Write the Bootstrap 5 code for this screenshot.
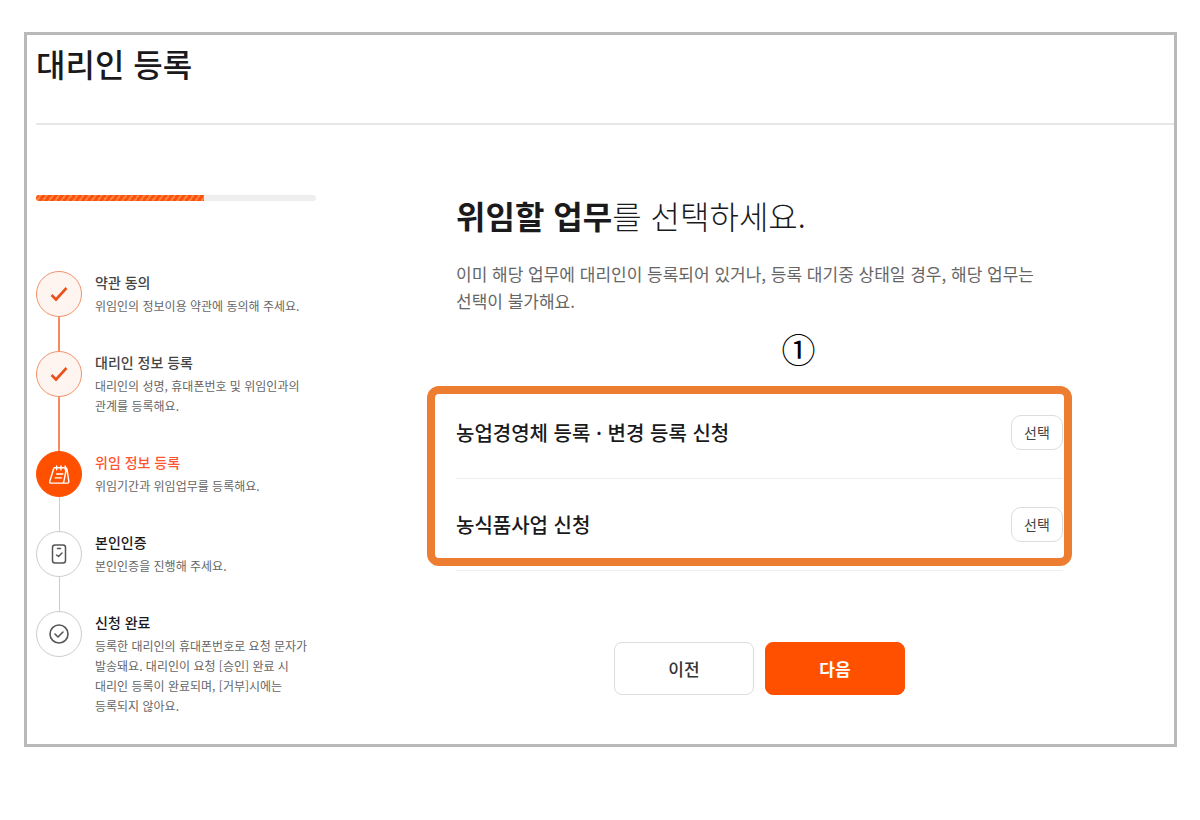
<!DOCTYPE html>
<html lang="ko">
<head>
<meta charset="utf-8">
<meta name="viewport" content="width=device-width, initial-scale=1">
<title>대리인 등록</title>
<link href="https://cdn.jsdelivr.net/npm/bootstrap@5.3.0/dist/css/bootstrap.min.css" rel="stylesheet">
<style>
  body { font-family: "Noto Sans CJK KR", "Noto Sans", sans-serif; color: #1a1a1c; background: #fff; word-break: keep-all; }
  .frame { margin: 32px 23px 32px 24px; border: 3px solid #b9b9b9; padding: 0 0 28px 9px; }
  .page-title { font-size: 32px; line-height: 40px; font-weight: 500; padding: 8px 0 40px; border-bottom: 2px solid #e6e6e6; }
  .layout { display: grid; grid-template-columns: 280px minmax(0, 1fr); column-gap: 140px; padding: 70px 111px 0 0; }
  .step-progress { height: 6px; border-radius: 3px; background: #eee; --bs-progress-bg: #eee; }
  .step-progress .progress-bar { background: repeating-linear-gradient(125deg, #f9530c 0 3px, #ff8040 3px 5px); }
  .steps { margin-top: 70px; }
  .step-mark { width: 46px; }
  .step-dot { width: 46px; height: 46px; border: 1px solid #ccc; border-radius: 50%; color: #555; }
  .step-line { width: 1px; background: #ccc; }
  .done .step-dot { border-color: #f39068; background: #fff5f0; color: #e8541c; }
  .done .step-line { width: 2px; background: #f58a5c; }
  .current .step-dot { border-color: #ff5000; background: #ff5000; color: #fff; }
  .step-text { margin-left: 13px; padding-bottom: 35px; }
  .step:last-child .step-text { padding-bottom: 0; }
  .step-name { font-size: 14px; line-height: 22px; font-weight: 500; margin: 0 0 3px; }
  .done .step-name { color: #444; }
  .current .step-name { color: #ff5630; }
  .step-desc { font-size: 12px; line-height: 20px; color: #666; margin: 0; }
  .question { font-size: 32px; line-height: 40px; font-weight: 300; margin: 0; }
  .guide { font-size: 17px; line-height: 27px; color: #666; margin: 25px 0 13px; }
  .callout { font-size: 34px; line-height: 44px; font-weight: 400; color: #000; padding-left: 78px; margin-bottom: 16px; }
  .tasks::after { content: ""; position: absolute; inset: -1px -9px 5px -29px; border: 8px solid #ed7d31; border-radius: 12px; pointer-events: none; }
  .task { height: 92px; border-bottom: 1px solid #eee; }
  .task-name { font-size: 20px; line-height: 30px; font-weight: 500; margin: 0; }
  .btn-pick { width: 52px; height: 35px; padding: 0; font-size: 14px; color: #444; border: 1px solid #ddd; border-radius: 10px; }
  .btn-move { width: 140px; height: 53px; font-size: 17px; font-weight: 500; border-radius: 8px; border: 1px solid #ddd; color: #333; }
  .btn-next, .btn-next:hover { background: #ff5000; border-color: #ff5000; color: #fff; font-weight: 700; }
  .moves { margin-top: 71px; gap: 11px; }
</style>
</head>
<body>
<main class="frame">
  <h1 class="page-title m-0">대리인 등록</h1>
  <div class="layout">
    <aside>
      <div class="progress step-progress" role="progressbar" aria-label="진행률" aria-valuenow="60" aria-valuemin="0" aria-valuemax="100">
        <div class="progress-bar" style="width:60%"></div>
      </div>
      <ol class="steps list-unstyled mb-0">
        <li class="step done d-flex">
          <div class="step-mark d-flex flex-column align-items-center flex-shrink-0">
            <span class="step-dot d-flex align-items-center justify-content-center flex-shrink-0">
              <svg width="20" height="20" viewBox="0 0 20 20" fill="none" stroke="currentColor" stroke-width="2.6"><path d="M2.5 11l4.500 4.500L17.500 4"/></svg>
            </span>
            <span class="step-line flex-grow-1"></span>
          </div>
          <div class="step-text">
            <h2 class="step-name">약관 동의</h2>
            <p class="step-desc">위임인의 정보이용 약관에 동의해 주세요.</p>
          </div>
        </li>
        <li class="step done d-flex">
          <div class="step-mark d-flex flex-column align-items-center flex-shrink-0">
            <span class="step-dot d-flex align-items-center justify-content-center flex-shrink-0">
              <svg width="20" height="20" viewBox="0 0 20 20" fill="none" stroke="currentColor" stroke-width="2.6"><path d="M2.5 11l4.500 4.500L17.500 4"/></svg>
            </span>
            <span class="step-line flex-grow-1"></span>
          </div>
          <div class="step-text">
            <h2 class="step-name">대리인 정보 등록</h2>
            <p class="step-desc">대리인의 성명, 휴대폰번호 및 위임인과의<br>관계를 등록해요.</p>
          </div>
        </li>
        <li class="step current d-flex" aria-current="step">
          <div class="step-mark d-flex flex-column align-items-center flex-shrink-0">
            <span class="step-dot d-flex align-items-center justify-content-center flex-shrink-0">
              <svg width="23" height="23" viewBox="0 0 24 24" fill="none" stroke="currentColor" stroke-width="1.5" stroke-linecap="round" stroke-linejoin="round"><path d="M7 5h11.500q1 0 1.200 1l2 13q.2 2-1.500 2H3.500q-2 0-1.700-1.800L5.800 6.200q.3-1.200 1.200-1.200zM19.200 6L16.500 19.500q-.3 1.500-1.700 1.500M9 3v4M13.500 3v4M18 3v4M9 11.500h6.500M7.500 15.500h6.500"/></svg>
            </span>
            <span class="step-line flex-grow-1"></span>
          </div>
          <div class="step-text">
            <h2 class="step-name">위임 정보 등록</h2>
            <p class="step-desc">위임기간과 위임업무를 등록해요.</p>
          </div>
        </li>
        <li class="step d-flex">
          <div class="step-mark d-flex flex-column align-items-center flex-shrink-0">
            <span class="step-dot d-flex align-items-center justify-content-center flex-shrink-0">
              <svg width="20" height="20" viewBox="0 0 20 20" fill="none" stroke="currentColor" stroke-width="1.500" stroke-linecap="round" stroke-linejoin="round"><rect x="3.500" y="1" width="13" height="18" rx="2.500"/><path d="M8.500 4.500h3M7.500 11l2 1.500 3.500-3.500"/></svg>
            </span>
            <span class="step-line flex-grow-1"></span>
          </div>
          <div class="step-text">
            <h2 class="step-name">본인인증</h2>
            <p class="step-desc">본인인증을 진행해 주세요.</p>
          </div>
        </li>
        <li class="step d-flex">
          <div class="step-mark d-flex flex-column align-items-center flex-shrink-0">
            <span class="step-dot d-flex align-items-center justify-content-center flex-shrink-0">
              <svg width="20" height="20" viewBox="0 0 20 20" fill="none" stroke="currentColor" stroke-width="1.600" stroke-linecap="round" stroke-linejoin="round"><circle cx="10" cy="10" r="9"/><path d="M6 10l3 3 5-5"/></svg>
            </span>
          </div>
          <div class="step-text">
            <h2 class="step-name">신청 완료</h2>
            <p class="step-desc">등록한 대리인의 휴대폰번호로 요청 문자가<br>발송돼요. 대리인이 요청 [승인] 완료 시<br>대리인 등록이 완료되며, [거부]시에는<br>등록되지 않아요.</p>
          </div>
        </li>
      </ol>
    </aside>
    <section>
      <h2 class="question"><strong class="fw-bold">위임할 업무</strong>를 선택하세요.</h2>
      <p class="guide">이미 해당 업무에 대리인이 등록되어 있거나, 등록 대기중 상태일 경우, 해당 업무는 <br>선택이 불가해요.</p>
      <div class="callout text-center">①</div>
      <ul class="tasks list-unstyled position-relative mb-0">
        <li class="task d-flex align-items-center justify-content-between">
          <h3 class="task-name">농업경영체 등록 · 변경 등록 신청</h3>
          <button type="button" class="btn btn-pick">선택</button>
        </li>
        <li class="task d-flex align-items-center justify-content-between">
          <h3 class="task-name">농식품사업 신청</h3>
          <button type="button" class="btn btn-pick">선택</button>
        </li>
      </ul>
      <div class="moves d-flex justify-content-center">
        <button type="button" class="btn btn-move">이전</button>
        <button type="button" class="btn btn-move btn-next">다음</button>
      </div>
    </section>
  </div>
</main>
<script src="https://cdn.jsdelivr.net/npm/bootstrap@5.3.0/dist/js/bootstrap.bundle.min.js"></script>
</body>
</html>
